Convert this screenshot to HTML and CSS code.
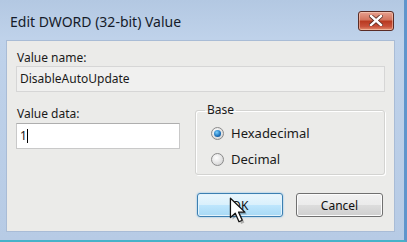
FILE: index.html
```html
<!DOCTYPE html>
<html lang="en">
<head>
    <meta charset="UTF-8">
    <title>Edit DWORD (32-bit) Value</title>
    <link rel="stylesheet" href="styles.css">
</head>
<body>
    <div class="window">
        <div class="titlebar">
            <span class="title">Edit DWORD (32-bit) Value</span>
            <button class="close" aria-label="Close">
                <svg width="14" height="11" viewBox="0 0 14 11">
                    <path d="M2 1 L12 10 M12 1 L2 10" stroke="#5a2a20" stroke-width="4" stroke-linecap="square"/>
                    <path d="M2 1 L12 10 M12 1 L2 10" stroke="#fff" stroke-width="2.4" stroke-linecap="square"/>
                </svg>
            </button>
        </div>
        <div class="client">
            <label class="label">Value name:</label>
            <div class="textbox readonly">DisableAutoUpdate</div>

            <div class="row">
                <div class="data-col">
                    <label class="label">Value data:</label>
                    <div class="textbox">1<span class="caret"></span></div>
                </div>
                <fieldset class="base">
                    <legend>Base</legend>
                    <div class="radio"><span class="dot checked"></span>Hexadecimal</div>
                    <div class="radio"><span class="dot"></span>Decimal</div>
                </fieldset>
            </div>

            <div class="buttons">
                <button class="btn default">OK</button>
                <button class="btn">Cancel</button>
            </div>
        </div>

        <!-- mouse pointer over the OK button -->
        <svg class="pointer" width="24" height="30" viewBox="0 0 22 28">
            <path d="M3 3 L3 21 L7.5 17 L11 25 L14 23.6 L10.6 16 L16.5 16 Z" fill="rgba(0,0,0,0.25)" transform="translate(2 2)"/>
            <path d="M3 3 L3 21 L7.5 17 L11 25 L14 23.6 L10.6 16 L16.5 16 Z" fill="#fff" stroke="#111" stroke-width="1.2" stroke-linejoin="round"/>
        </svg>
    </div>
</body>
</html>
```

FILE: styles.css
```css
body {
    margin: 0;
    padding: 0;
    font-family: "Noto Sans", Arial, sans-serif;
    font-size: 12px;
    color: #1a1a1a;
}
.window {
    position: relative;
    width: 407px;
    height: 242px;
    box-sizing: border-box;
    padding: 0 9px 8px 6px;
    display: flex;
    flex-direction: column;
    background: linear-gradient(to bottom, #b3c8e2 0%, #bfd2ea 16%, #b7cbe5 100%);
    border-right: 3px solid #5f95cc;
    border-bottom: 2px solid #46b2c9;
    overflow: hidden;
}
.titlebar {
    height: 40px;
    display: flex;
    align-items: center;
    justify-content: space-between;
    padding: 0 0 0 4px;
    flex: none;
}
.title {
    font-size: 14px;
    color: #151b2a;
    margin-top: 3px;
}
.close {
    width: 36px;
    height: 20px;
    margin-right: 1px;
    margin-top: 1px;
    padding: 0;
    border: 1px solid #5a2c26;
    border-radius: 3px;
    background: linear-gradient(to bottom, #e7a08f 0%, #d3735c 45%, #b8391f 50%, #c8513a 80%, #e38e6e 100%);
    box-shadow: inset 0 0 0 1px rgba(255, 220, 200, 0.5);
    display: flex;
    align-items: center;
    justify-content: center;
}
.client {
    flex: 1;
    background: #ebebe9;
    border: 1px solid #a9bcd6;
    padding: 9px 9px 0 9px;
    display: flex;
    flex-direction: column;
}
.label {
    display: block;
    height: 16px;
    line-height: 16px;
    margin-left: 1px;
}
.textbox {
    height: 24px;
    line-height: 24px;
    border: 1px solid #c9c9c9;
    border-top-color: #aeaeae;
    background: #fff;
    padding-left: 3px;
    font-size: 12px;
}
.textbox.readonly {
    background: #f0f0ef;
    border-color: #d6d6d6;
    margin-top: 0;
}
.caret {
    display: inline-block;
    width: 1px;
    height: 14px;
    background: #000;
    vertical-align: -3px;
}
.row {
    display: flex;
    gap: 15px;
    margin-top: 14px;
}
.data-col {
    width: 164px;
}
.data-col .textbox {
    margin-top: 1px;
}
.base {
    flex: 1;
    margin: -2px 0 0 0;
    height: 71px;
    box-sizing: border-box;
    border: 1px solid #d3d3d1;
    border-radius: 3px;
    box-shadow: inset 1px 1px 0 #fff, 1px 1px 0 #fff;
    padding: 4px 0 0 15px;
    position: relative;
}
.base legend {
    padding: 0 2px;
    margin-left: -6px;
    line-height: 12px;
}
.radio {
    display: flex;
    align-items: center;
    height: 26px;
    font-size: 13px;
}
.dot {
    width: 11px;
    height: 11px;
    border-radius: 50%;
    border: 1px solid #8a8a8a;
    background: radial-gradient(circle at 40% 35%, #ffffff 0%, #e0e0e0 60%, #c8c8c8 100%);
    margin-right: 7px;
    position: relative;
}
.dot.checked::after {
    content: "";
    position: absolute;
    left: 2px;
    top: 2px;
    width: 7px;
    height: 7px;
    border-radius: 50%;
    background: radial-gradient(circle at 40% 35%, #7ad0ff 0%, #1a6fb8 60%, #0c3f7a 100%);
}
.buttons {
    display: flex;
    justify-content: flex-end;
    gap: 13px;
    margin-top: 18px;
    padding-right: 2px;
}
.btn {
    width: 87px;
    height: 24px;
    font-family: "Noto Sans", Arial, sans-serif;
    font-size: 12px;
    color: #111;
    border: 1px solid #707070;
    border-radius: 3px;
    background: linear-gradient(to bottom, #f2f2f2 0%, #ebebeb 48%, #dddddd 50%, #cfcfcf 100%);
    box-shadow: inset 0 0 0 1px #fcfcfc;
    padding: 0;
}
.btn.default {
    width: 86px;
    border-color: #3c7fb1;
    background: linear-gradient(to bottom, #eaf6fd 0%, #d9f0fc 48%, #bee6fd 50%, #a7d9f5 100%);
    box-shadow: inset 0 0 0 1px #e3f3fc, 0 0 2px #6fb6e8;
}
.pointer {
    position: absolute;
    left: 227px;
    top: 195px;
}
```
